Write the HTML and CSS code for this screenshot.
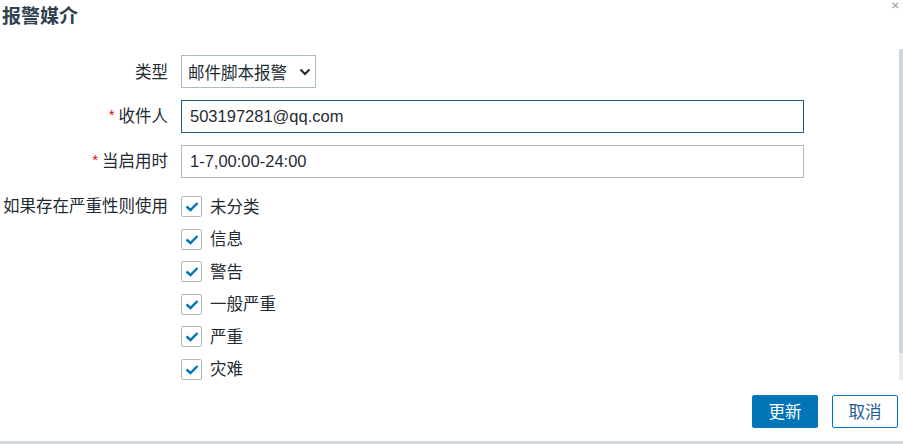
FILE: index.html
```html
<!DOCTYPE html>
<html lang="zh">
<head>
<meta charset="utf-8">
<link rel="stylesheet" href="styles.css">
</head>
<body>
<div class="dialog">
  <div class="head">
    <h1 class="title">报警媒介</h1>
    <span class="close">&#x2715;</span>
  </div>
  <div class="form">
    <div class="row">
      <label class="lbl">类型</label>
      <div class="field">
        <div class="select">邮件脚本报警
          <svg class="chev" width="12" height="8" viewBox="0 0 12 8"><path d="M1.5 1.5 L6 6 L10.5 1.5" fill="none" stroke="#1f2c33" stroke-width="2"/></svg>
        </div>
      </div>
    </div>
    <div class="row">
      <label class="lbl"><span class="req">*</span>收件人</label>
      <div class="field"><div class="input focus">503197281@qq.com</div></div>
    </div>
    <div class="row">
      <label class="lbl"><span class="req">*</span>当启用时</label>
      <div class="field"><div class="input">1-7,00:00-24:00</div></div>
    </div>
    <div class="row top">
      <label class="lbl lbl-cb">如果存在严重性则使用</label>
      <div class="checks">
        <div class="cb"><span class="box"><svg width="14" height="11" viewBox="0 0 14 11"><path d="M1.5 5.5 L5.5 9 L12.5 2" fill="none" stroke="#0275b8" stroke-width="2.4"/></svg></span>未分类</div>
        <div class="cb"><span class="box"><svg width="14" height="11" viewBox="0 0 14 11"><path d="M1.5 5.5 L5.5 9 L12.5 2" fill="none" stroke="#0275b8" stroke-width="2.4"/></svg></span>信息</div>
        <div class="cb"><span class="box"><svg width="14" height="11" viewBox="0 0 14 11"><path d="M1.5 5.5 L5.5 9 L12.5 2" fill="none" stroke="#0275b8" stroke-width="2.4"/></svg></span>警告</div>
        <div class="cb"><span class="box"><svg width="14" height="11" viewBox="0 0 14 11"><path d="M1.5 5.5 L5.5 9 L12.5 2" fill="none" stroke="#0275b8" stroke-width="2.4"/></svg></span>一般严重</div>
        <div class="cb"><span class="box"><svg width="14" height="11" viewBox="0 0 14 11"><path d="M1.5 5.5 L5.5 9 L12.5 2" fill="none" stroke="#0275b8" stroke-width="2.4"/></svg></span>严重</div>
        <div class="cb"><span class="box"><svg width="14" height="11" viewBox="0 0 14 11"><path d="M1.5 5.5 L5.5 9 L12.5 2" fill="none" stroke="#0275b8" stroke-width="2.4"/></svg></span>灾难</div>
      </div>
    </div>
  </div>
  <div class="foot">
    <button class="btn primary">更新</button>
    <button class="btn secondary">取消</button>
  </div>
  <div class="scroll"><div class="thumb"></div></div>
</div>
</body>
</html>
```
FILE: styles.css
```css
html, body {
  margin: 0;
  padding: 0;
  background: #fff;
}
body {
  font-family: "Liberation Sans", "Noto Sans CJK SC", sans-serif;
  font-size: 16.5px;
  color: #1f2c33;
}
.dialog {
  position: relative;
  width: 903px;
  height: 444px;
  box-sizing: border-box;
  border-bottom: 3px solid #d3d8da;
  overflow: hidden;
}
.head {
  display: flex;
  justify-content: space-between;
  align-items: flex-start;
  height: 40px;
}
.title {
  margin: 3px 0 0 2px;
  font-size: 19px;
  font-weight: bold;
  color: #2f4250;
  line-height: 28px;
}
.close {
  margin: 0 4px 0 0;
  font-size: 10px;
  line-height: 11px;
  color: #a9b2b8;
  font-weight: bold;
}
.form {
  display: flex;
  flex-direction: column;
  gap: 12px;
  margin-top: 15px;
}
.row {
  display: flex;
  align-items: center;
  gap: 13px;
}
.row.top {
  align-items: flex-start;
  margin-top: 6px;
}
.lbl {
  width: 168px;
  text-align: right;
  line-height: 20px;
  white-space: nowrap;
}
.lbl-cb {
  margin-top: 0;
}
.req {
  color: #d40000;
  font-size: 14px;
  margin-right: 4px;
  position: relative;
  top: -2px;
}
.select {
  width: 135px;
  height: 33px;
  box-sizing: border-box;
  border: 1px solid #acbbc0;
  display: flex;
  align-items: center;
  justify-content: space-between;
  padding: 0 4px 0 6px;
}
.input {
  width: 623px;
  height: 33px;
  box-sizing: border-box;
  border: 1px solid #acbbc0;
  display: flex;
  align-items: center;
  padding: 0 8px;
}
.input.focus {
  border-color: #1f5c87;
}
.checks {
  display: flex;
  flex-direction: column;
  gap: 11.6px;
}
.cb {
  display: flex;
  align-items: center;
  gap: 8px;
  line-height: 20px;
}
.box {
  width: 21px;
  height: 21px;
  box-sizing: border-box;
  border: 1px solid #acbbc0;
  border-radius: 2px;
  display: flex;
  align-items: center;
  justify-content: center;
}
.foot {
  display: flex;
  justify-content: flex-end;
  gap: 14px;
  margin-top: 15px;
  padding-right: 5px;
}
.btn {
  width: 66px;
  height: 33px;
  box-sizing: border-box;
  font-family: "Liberation Sans", "Noto Sans CJK SC", sans-serif;
  font-size: 16.5px;
  border-radius: 2px;
  padding: 0;
}
.primary {
  background: #0275b8;
  border: 1px solid #0275b8;
  color: #fff;
}
.secondary {
  background: #fff;
  border: 1px solid #0275b8;
  color: #1b5a99;
}
.scroll {
  position: absolute;
  right: 0;
  top: 49px;
  width: 4px;
  height: 331px;
  background: #ebebeb;
}
.thumb {
  height: 304px;
  background: #cdd6da;
}
```
